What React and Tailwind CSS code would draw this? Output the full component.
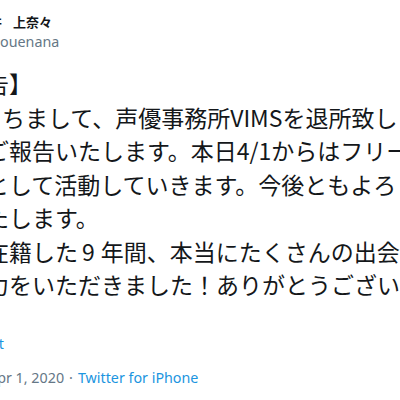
import React from 'react';

const lines = [
  { ml: 'ml-[-14px]', text: '告】' },
  { ml: 'ml-[2px]', text: 'ちまして、声優事務所VIMSを退所致しました' },
  { ml: 'ml-[-14px]', text: 'ご報告いたします。本日4/1からはフリーとして' },
  { ml: 'ml-[-14px]', text: 'として活動していきます。今後ともよろしく' },
  { ml: 'ml-[-14px]', text: 'たします。' },
  { ml: 'ml-[-14px]', text: ['在籍した', <span key="n" className="ml-[4px] mr-[6px]">9</span>, '年間、本当にたくさんの出会いと'] },
  { ml: 'ml-[-14px]', text: '力をいただきました！ありがとうございました' },
];

export default function App() {
  return (
    <div className="w-[400px] h-[400px] overflow-hidden bg-white text-[#14171a] font-['Noto_Sans','Noto_Sans_CJK_JP',sans-serif]">
      {/* account header, left part cut off */}
      <div className="pt-[12px]">
        <div className="flex h-[20px] items-center whitespace-nowrap font-['Noto_Sans_CJK_JP',sans-serif] text-[13px] font-bold leading-[20px]">
          <div className="w-[2px] min-w-0 overflow-hidden flex justify-end">
            <span className="shrink-0">井</span>
          </div>
          <span className="ml-[11px]">上奈々</span>
        </div>
        <div className="flex h-[20px] items-center whitespace-nowrap text-[14.3px] leading-[20px] text-[#657786]">
          <div className="w-0 min-w-0 flex justify-end">
            <span>@in</span>
          </div>
          <span>ouenana</span>
        </div>
      </div>

      {/* tweet text */}
      <div className="mt-[15px] text-[23px] leading-[33.5px] font-['Noto_Sans_CJK_JP',sans-serif]">
        {lines.map((l, i) => (
          <div key={i} className={`${l.ml} whitespace-nowrap`}>
            {l.text}
          </div>
        ))}
      </div>

      {/* translate */}
      <div className="mt-[32px] flex h-[20px] whitespace-nowrap text-[14.3px] leading-[20px] text-[#1b95e0]">
        <div className="w-[4px] min-w-0 flex justify-end">
          <span>Translate Tweet</span>
        </div>
      </div>

      {/* timestamp + source */}
      <div className="mt-[14px] flex h-[20px] items-center whitespace-nowrap text-[14.3px] leading-[20px] text-[#657786]">
        <div className="w-[6px] min-w-0 flex justify-end">
          <span>11:23 AM · Ap</span>
        </div>
        <span>r 1, 2020</span>
        <span className="mx-[5px]">·</span>
        <span className="text-[#1b95e0]">Twitter for iPhone</span>
      </div>
    </div>
  );
}
